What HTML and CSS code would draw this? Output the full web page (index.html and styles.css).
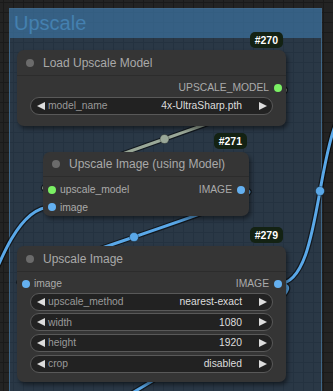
FILE: index.html
```html
<!DOCTYPE html>
<html lang="en">
<head>
    <meta charset="UTF-8">
    <title>Upscale</title>
    <link rel="stylesheet" href="styles.css">
</head>
<body>
    <div class="canvas">
        <div class="group">
            <div class="group-header">Upscale</div>
        </div>

        <svg class="links" width="333" height="391" viewBox="0 0 333 391">
            <g class="link-shadow">
                <path d="M278 88 C340 88 -11 190 51 190"/>
                <path d="M242 190 C301 190 -33 284 26 284"/>
                <path d="M-90 410 C-28 410 -11 207 51 207"/>
                <path d="M278 284 C329 284 311 98 362 98"/>
                <path d="M278 284 C353 284 -35 470 40 470"/>
            </g>
            <path class="link link-model" d="M278 88 C340 88 -11 190 51 190"/>
            <g class="link link-image">
                <path d="M242 190 C301 190 -33 284 26 284"/>
                <path d="M-90 410 C-28 410 -11 207 51 207"/>
                <path d="M278 284 C329 284 311 98 362 98"/>
                <path d="M278 284 C353 284 -35 470 40 470"/>
            </g>
            <circle class="link-dot dot-model" cx="164.5" cy="139" r="4.5"/>
            <circle class="link-dot dot-image" cx="134" cy="237" r="4.5"/>
            <circle class="link-dot dot-image" cx="320" cy="191" r="4.5"/>
        </svg>

        <!-- Load Upscale Model -->
        <div class="node node-270">
            <div class="badge">#270</div>
            <div class="node-title"><span class="title-dot"></span>Load Upscale Model</div>
            <div class="node-body">
                <div class="slot-row out-only">
                    <span class="slot-label">UPSCALE_MODEL</span>
                    <span class="slot slot-model"></span>
                </div>
                <div class="widgets">
                    <div class="widget">
                        <span class="arrow arrow-left"></span>
                        <span class="widget-name">model_name</span>
                        <span class="widget-value">4x-UltraSharp.pth</span>
                        <span class="arrow arrow-right"></span>
                    </div>
                </div>
            </div>
        </div>

        <!-- Upscale Image (using Model) -->
        <div class="node node-271">
            <div class="badge">#271</div>
            <div class="node-title"><span class="title-dot"></span>Upscale Image (using Model)</div>
            <div class="node-body">
                <div class="slot-row">
                    <span class="slot-in"><span class="slot slot-model"></span><span class="slot-label">upscale_model</span></span>
                    <span class="slot-out"><span class="slot-label">IMAGE</span><span class="slot slot-image"></span></span>
                </div>
                <div class="slot-row">
                    <span class="slot-in"><span class="slot slot-image"></span><span class="slot-label">image</span></span>
                </div>
            </div>
        </div>

        <!-- Upscale Image -->
        <div class="node node-279">
            <div class="badge">#279</div>
            <div class="node-title"><span class="title-dot"></span>Upscale Image</div>
            <div class="node-body">
                <div class="slot-row">
                    <span class="slot-in"><span class="slot slot-image"></span><span class="slot-label">image</span></span>
                    <span class="slot-out"><span class="slot-label">IMAGE</span><span class="slot slot-image"></span></span>
                </div>
                <div class="widgets">
                    <div class="widget">
                        <span class="arrow arrow-left"></span>
                        <span class="widget-name">upscale_method</span>
                        <span class="widget-value">nearest-exact</span>
                        <span class="arrow arrow-right"></span>
                    </div>
                    <div class="widget">
                        <span class="arrow arrow-left"></span>
                        <span class="widget-name">width</span>
                        <span class="widget-value">1080</span>
                        <span class="arrow arrow-right"></span>
                    </div>
                    <div class="widget">
                        <span class="arrow arrow-left"></span>
                        <span class="widget-name">height</span>
                        <span class="widget-value">1920</span>
                        <span class="arrow arrow-right"></span>
                    </div>
                    <div class="widget">
                        <span class="arrow arrow-left"></span>
                        <span class="widget-name">crop</span>
                        <span class="widget-value">disabled</span>
                        <span class="arrow arrow-right"></span>
                    </div>
                </div>
            </div>
        </div>
    </div>
</body>
</html>
```

FILE: styles.css
```css
body {
    margin: 0;
    padding: 0;
    font-family: "Liberation Sans", Arial, sans-serif;
    background-color: #222;
}
.canvas {
    position: relative;
    width: 333px;
    height: 391px;
    overflow: hidden;
    background-color: #232323;
    background-image:
        linear-gradient(to right, #1a1a1a 1px, transparent 1px),
        linear-gradient(to bottom, #1a1a1a 1px, transparent 1px);
    background-size: 10px 10px;
    background-position: 3px 2px;
}
.group {
    position: absolute;
    left: 9px;
    top: 8px;
    width: 313px;
    height: 420px;
    background-color: rgba(57, 97, 137, 0.35);
    border: 1px solid rgba(80, 140, 190, 0.55);
    box-sizing: border-box;
}
.group-header {
    height: 29px;
    background-color: rgba(64, 124, 174, 0.6);
    color: #4480b0;
    font-size: 20px;
    line-height: 28px;
    padding-left: 4px;
}
.links {
    position: absolute;
    left: 0;
    top: 0;
    overflow: visible;
}
.links path {
    fill: none;
}
.link-shadow path {
    stroke: rgba(0, 0, 0, 0.55);
    stroke-width: 5.5;
}
.link {
    stroke-width: 3;
}
.link-model {
    stroke: #9aa898;
}
.link-image path {
    stroke: #5aa8e8;
}
.link-dot {
    stroke: rgba(0, 0, 0, 0.3);
    stroke-width: 1;
}
.dot-model {
    fill: #9aa898;
}
.dot-image {
    fill: #5aa8e8;
}
.node {
    position: absolute;
    background-color: #353535;
    border-radius: 7px;
    box-shadow: 2px 3px 4px rgba(0, 0, 0, 0.45);
    color: #aaa;
}
.node-270 {
    left: 17px;
    top: 50px;
    width: 269px;
    height: 76px;
}
.node-271 {
    left: 43px;
    top: 152px;
    width: 206px;
    height: 64px;
}
.node-279 {
    left: 17px;
    top: 246px;
    width: 269px;
    height: 136px;
}
.badge {
    position: absolute;
    right: 3px;
    top: -18px;
    height: 16px;
    padding: 0 5px;
    background-color: #132213;
    color: #fff;
    font-size: 10.5px;
    font-weight: bold;
    line-height: 16px;
    border-radius: 5px;
}
.node-271 .badge {
    right: 2px;
    top: -19px;
}
.node-279 .badge {
    top: -19px;
}
.node-title {
    display: flex;
    align-items: center;
    height: 26px;
    box-sizing: border-box;
    border-bottom: 1px solid #2c2c2c;
    font-size: 12px;
    color: #a9a9a9;
    padding-left: 9px;
}
.node-271 .node-title {
    height: 25px;
}
.title-dot {
    width: 8px;
    height: 8px;
    border-radius: 50%;
    background-color: #6b6b6b;
    margin-right: 9px;
}
.node-body {
    padding-top: 3px;
}
.node-271 .node-body {
    padding-top: 4px;
}
.slot-row {
    display: flex;
    align-items: center;
    justify-content: space-between;
    height: 17.5px;
    font-size: 10.3px;
    padding: 0 4px 0 4.5px;
}
.out-only {
    justify-content: flex-end;
}
.slot-in,
.slot-out {
    display: flex;
    align-items: center;
}
.slot-in .slot-label {
    margin-left: 4.5px;
}
.slot-label + .slot,
.out-only .slot {
    margin-left: 5px;
}
.slot {
    width: 8px;
    height: 8px;
    border-radius: 50%;
}
.slot-model {
    background-color: #7bf064;
}
.slot-image {
    background-color: #64b0f0;
}
.widgets {
    display: flex;
    flex-direction: column;
    gap: 2.7px;
    padding: 0 13px;
}
.widget {
    display: flex;
    align-items: center;
    height: 18px;
    box-sizing: border-box;
    border: 1px solid #595959;
    border-radius: 9px;
    background-color: #222;
    font-size: 10.3px;
    padding: 0 5px 0 6px;
}
.widget-name {
    color: #999;
    margin-left: 3px;
    flex: 1;
}
.widget-value {
    color: #ddd;
    margin-right: 17px;
}
.arrow {
    width: 0;
    height: 0;
    border-top: 4.5px solid transparent;
    border-bottom: 4.5px solid transparent;
}
.arrow-left {
    border-right: 8px solid #ddd;
}
.arrow-right {
    border-left: 8px solid #ddd;
}
```
